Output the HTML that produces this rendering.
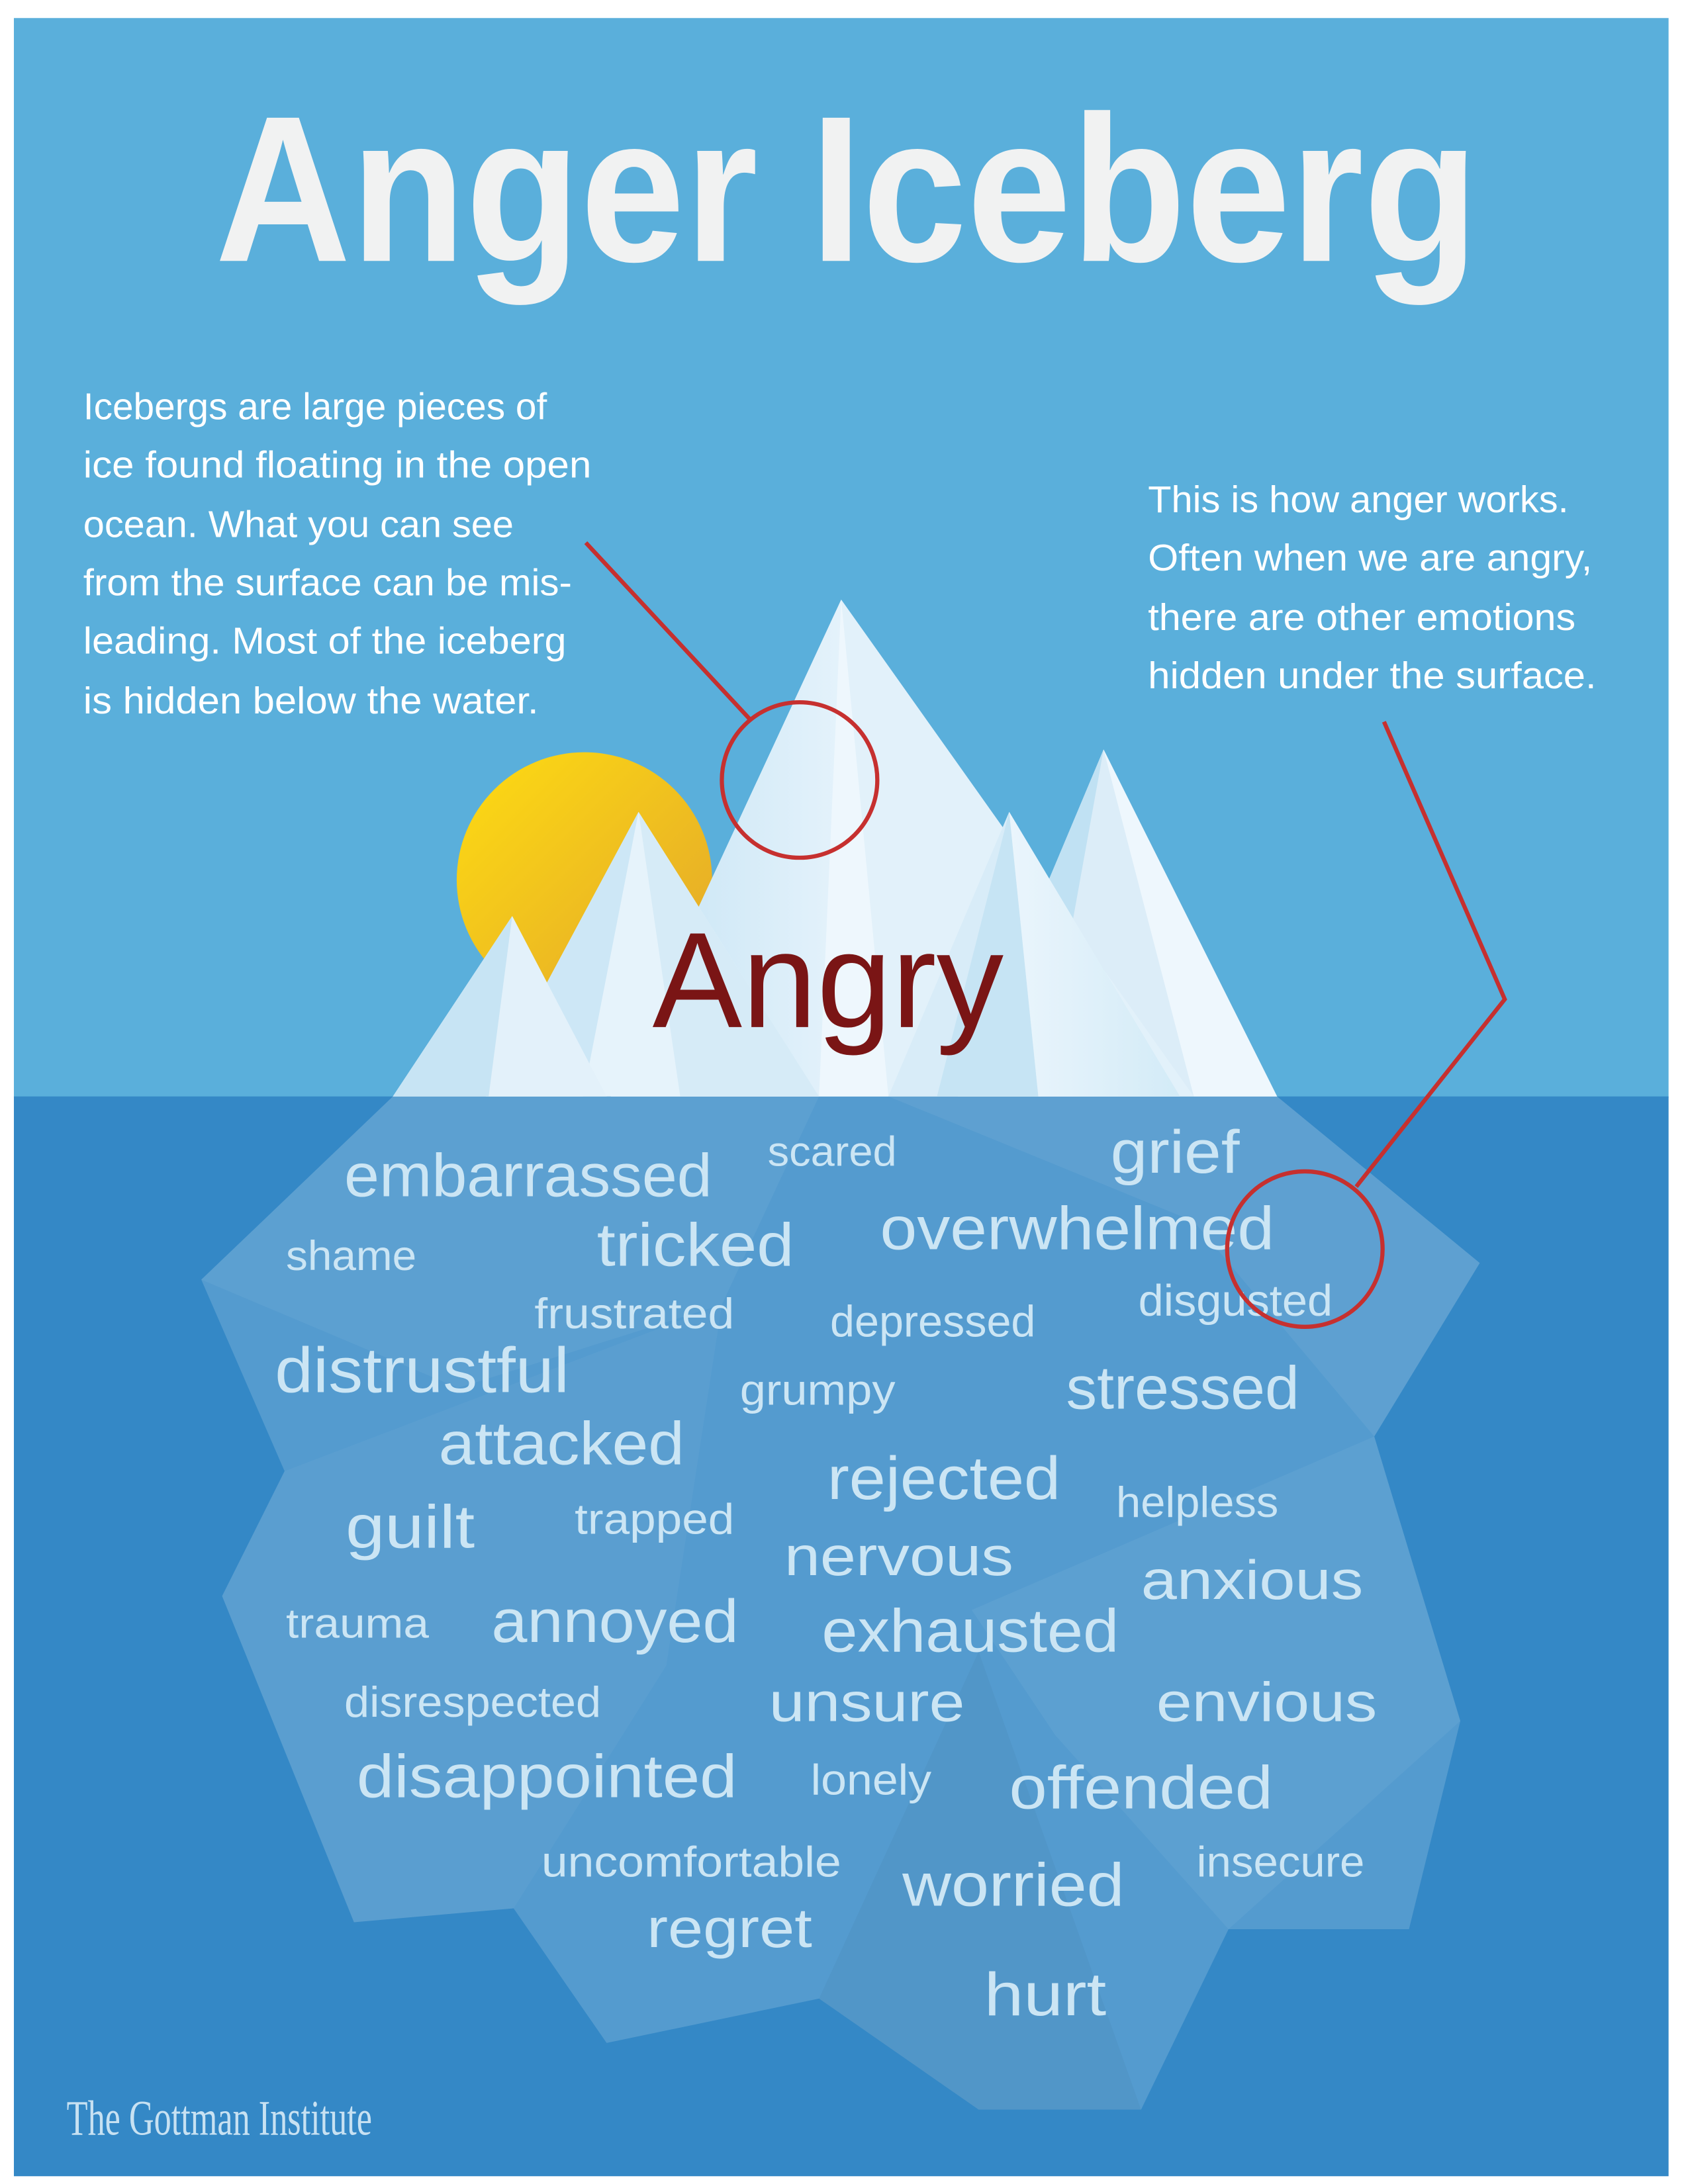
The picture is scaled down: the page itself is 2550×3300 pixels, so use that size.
<!DOCTYPE html>
<html><head><meta charset="utf-8"><style>html,body{margin:0;padding:0;background:#fff}svg{display:block}</style></head><body>
<svg width="2550" height="3300" viewBox="0 0 1216 1573.6" preserveAspectRatio="none" xmlns="http://www.w3.org/2000/svg">
<defs>
<linearGradient id="sun" x1="0" y1="0" x2="1" y2="1"><stop offset="0" stop-color="#fedc12"/><stop offset="1" stop-color="#e2a52c"/></linearGradient>
<linearGradient id="iceL" x1="0" y1="0" x2="1" y2="0"><stop offset="0" stop-color="#c4e3f4"/><stop offset="1" stop-color="#e4f2fb"/></linearGradient>
<linearGradient id="iceR" x1="0" y1="0" x2="1" y2="0"><stop offset="0" stop-color="#eaf5fc"/><stop offset="1" stop-color="#d3ebf7"/></linearGradient>
</defs>
<rect x="0" y="0" width="1216" height="1574" fill="#fff"/>
<rect x="10" y="13" width="1192" height="778" fill="#5aafdb"/>
<rect x="10" y="790" width="1192" height="778" fill="#3488c6"/>

<!-- title -->
<text x="155" y="188" font-family="Liberation Sans, sans-serif" font-weight="bold" font-size="150" fill="#f1f2f2" textLength="910" lengthAdjust="spacingAndGlyphs">Anger Iceberg</text>

<g font-family="Liberation Sans, sans-serif" font-size="27" fill="#ffffff">
<text x="60" y="302" textLength="334" lengthAdjust="spacingAndGlyphs">Icebergs are large pieces of</text>
<text x="60" y="344" textLength="366" lengthAdjust="spacingAndGlyphs">ice found floating in the open</text>
<text x="60" y="387" textLength="310" lengthAdjust="spacingAndGlyphs">ocean. What you can see</text>
<text x="60" y="429" textLength="352" lengthAdjust="spacingAndGlyphs">from the surface can be mis-</text>
<text x="60" y="471" textLength="348" lengthAdjust="spacingAndGlyphs">leading. Most of the iceberg</text>
<text x="60" y="514" textLength="328" lengthAdjust="spacingAndGlyphs">is hidden below the water.</text>
<text x="827" y="369" textLength="303" lengthAdjust="spacingAndGlyphs">This is how anger works.</text>
<text x="827" y="411" textLength="320" lengthAdjust="spacingAndGlyphs">Often when we are angry,</text>
<text x="827" y="454" textLength="308" lengthAdjust="spacingAndGlyphs">there are other emotions</text>
<text x="827" y="496" textLength="323" lengthAdjust="spacingAndGlyphs">hidden under the surface.</text>
</g>

<!-- sun -->
<circle cx="421" cy="634" r="92" fill="url(#sun)"/>

<!-- mountains -->
<polygon points="795,540 690,790 920,790" fill="#dcedf8"/>
<polygon points="795,540 690,790 750,790" fill="#c0e1f3"/>
<polygon points="795,540 860,790 920,790" fill="#eef7fd"/>
<polygon points="606,432 440,790 860,790" fill="#e2f1fa"/>
<polygon points="606,432 440,790 590,790" fill="url(#iceL)"/>
<polygon points="606,432 590,790 640,790" fill="#eef7fd"/>
<polygon points="727,585 640,790 850,790" fill="#d8ecf8"/>
<polygon points="727,585 675,790 748,790" fill="#c6e4f4"/>
<polygon points="727,585 748,790 850,790" fill="url(#iceR)"/>
<polygon points="460,585 350,790 590,790" fill="#e6f3fb"/>
<polygon points="460,585 350,790 420,790" fill="#cde7f6"/>
<polygon points="460,585 490,790 590,790" fill="#d6ebf7"/>
<polygon points="369,660 283,790 437,790" fill="#e3f1fa"/>
<polygon points="369,660 283,790 352,790" fill="#c7e4f4"/>

<text x="470" y="740" font-family="Liberation Sans, sans-serif" font-size="98" fill="#7a1515" textLength="253" lengthAdjust="spacingAndGlyphs">Angry</text>

<!-- underwater berg -->
<polygon points="283,790 920,790 1066,910 990,1035 1052,1240 1015,1390 885,1390 822,1520 705,1520 590,1440 437,1472 370,1375 255,1385 160,1150 205,1060 145,922" fill="#ffffff" fill-opacity="0.16"/>
<polygon points="283,790 590,790 520,940 330,1000 145,922" fill="#ffffff" fill-opacity="0.05"/>
<polygon points="640,790 920,790 1066,910 990,1035 860,880" fill="#ffffff" fill-opacity="0.06"/>
<polygon points="205,1060 520,940 480,1200 370,1375 255,1385 160,1150" fill="#ffffff" fill-opacity="0.04"/>
<polygon points="700,1160 990,1035 1052,1240 885,1390 760,1250" fill="#ffffff" fill-opacity="0.05"/>
<polygon points="590,1440 705,1190 822,1520 705,1520" fill="#000" fill-opacity="0.03"/>

<g font-family="Liberation Sans, sans-serif" fill="#cbe5f4">
<text x="248" y="862" font-size="44" textLength="265" lengthAdjust="spacingAndGlyphs">embarrassed</text>
<text x="553" y="840" font-size="30" textLength="93" lengthAdjust="spacingAndGlyphs">scared</text>
<text x="800" y="845" font-size="44" textLength="93" lengthAdjust="spacingAndGlyphs">grief</text>
<text x="206" y="915" font-size="30" textLength="94" lengthAdjust="spacingAndGlyphs">shame</text>
<text x="430" y="912" font-size="44" textLength="142" lengthAdjust="spacingAndGlyphs">tricked</text>
<text x="634" y="900" font-size="44" textLength="284" lengthAdjust="spacingAndGlyphs">overwhelmed</text>
<text x="385" y="957" font-size="31" textLength="144" lengthAdjust="spacingAndGlyphs">frustrated</text>
<text x="598" y="963" font-size="32" textLength="148" lengthAdjust="spacingAndGlyphs">depressed</text>
<text x="820" y="948" font-size="32" textLength="140" lengthAdjust="spacingAndGlyphs">disgusted</text>
<text x="198" y="1003" font-size="46" textLength="212" lengthAdjust="spacingAndGlyphs">distrustful</text>
<text x="533" y="1012" font-size="31" textLength="112" lengthAdjust="spacingAndGlyphs">grumpy</text>
<text x="768" y="1015" font-size="44" textLength="168" lengthAdjust="spacingAndGlyphs">stressed</text>
<text x="316" y="1055" font-size="44" textLength="177" lengthAdjust="spacingAndGlyphs">attacked</text>
<text x="596" y="1080" font-size="44" textLength="168" lengthAdjust="spacingAndGlyphs">rejected</text>
<text x="804" y="1093" font-size="31" textLength="117" lengthAdjust="spacingAndGlyphs">helpless</text>
<text x="249" y="1115" font-size="44" textLength="93" lengthAdjust="spacingAndGlyphs">guilt</text>
<text x="414" y="1105" font-size="31" textLength="115" lengthAdjust="spacingAndGlyphs">trapped</text>
<text x="565" y="1135" font-size="40" textLength="165" lengthAdjust="spacingAndGlyphs">nervous</text>
<text x="822" y="1152" font-size="40" textLength="160" lengthAdjust="spacingAndGlyphs">anxious</text>
<text x="206" y="1180" font-size="30" textLength="103" lengthAdjust="spacingAndGlyphs">trauma</text>
<text x="354" y="1183" font-size="44" textLength="178" lengthAdjust="spacingAndGlyphs">annoyed</text>
<text x="592" y="1190" font-size="44" textLength="214" lengthAdjust="spacingAndGlyphs">exhausted</text>
<text x="248" y="1237" font-size="31" textLength="185" lengthAdjust="spacingAndGlyphs">disrespected</text>
<text x="554" y="1240" font-size="40" textLength="141" lengthAdjust="spacingAndGlyphs">unsure</text>
<text x="833" y="1240" font-size="40" textLength="159" lengthAdjust="spacingAndGlyphs">envious</text>
<text x="257" y="1295" font-size="44" textLength="274" lengthAdjust="spacingAndGlyphs">disappointed</text>
<text x="584" y="1293" font-size="31" textLength="87" lengthAdjust="spacingAndGlyphs">lonely</text>
<text x="727" y="1303" font-size="44" textLength="190" lengthAdjust="spacingAndGlyphs">offended</text>
<text x="390" y="1352" font-size="31" textLength="216" lengthAdjust="spacingAndGlyphs">uncomfortable</text>
<text x="862" y="1352" font-size="31" textLength="121" lengthAdjust="spacingAndGlyphs">insecure</text>
<text x="650" y="1373" font-size="44" textLength="160" lengthAdjust="spacingAndGlyphs">worried</text>
<text x="466" y="1403" font-size="40" textLength="119" lengthAdjust="spacingAndGlyphs">regret</text>
<text x="709" y="1452" font-size="44" textLength="88" lengthAdjust="spacingAndGlyphs">hurt</text>
</g>

<text x="48" y="1538" font-family="Liberation Serif, serif" font-size="36" fill="#c7e1f2" textLength="220" lengthAdjust="spacingAndGlyphs">The Gottman Institute</text>

<!-- red callouts -->
<g fill="none" stroke="#c6302f" stroke-width="3">
<line x1="422" y1="391" x2="540" y2="518"/>
<ellipse cx="576" cy="562" rx="56" ry="56"/>
<polyline points="997,520 1084,720 977,855"/>
<ellipse cx="940" cy="900" rx="56" ry="56"/>
</g>
</svg>
</body></html>
